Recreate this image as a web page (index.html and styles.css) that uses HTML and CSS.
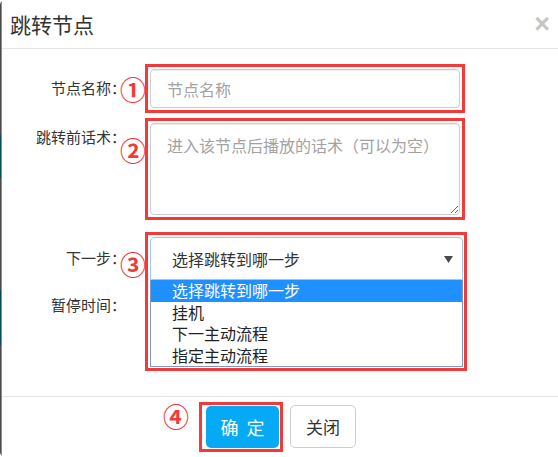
FILE: index.html
```html
<!DOCTYPE html>
<html lang="zh-CN">
<head>
    <meta charset="UTF-8">
    <meta name="viewport" content="width=device-width, initial-scale=1.0">
    <title>跳转节点</title>
    <link rel="stylesheet" href="styles.css">
</head>
<body>
    <div class="modal">
        <div class="modal-header">
            <h4 class="modal-title">跳转节点</h4>
            <button type="button" class="close">&times;</button>
        </div>

        <div class="modal-body">
            <!-- 节点名称 -->
            <div class="form-row row-name">
                <label class="form-label">
                    <span class="label-text">节点名称<span class="colon">：</span></span>
                    <span class="num">①</span>
                </label>
                <div class="mark">
                    <input type="text" class="form-control" placeholder="节点名称">
                </div>
            </div>

            <!-- 跳转前话术 -->
            <div class="form-row row-speech">
                <label class="form-label">
                    <span class="label-text">跳转前话术<span class="colon">：</span></span>
                    <span class="num">②</span>
                </label>
                <div class="mark">
                    <textarea class="form-control" placeholder="进入该节点后播放的话术（可以为空）"></textarea>
                </div>
            </div>

            <!-- 下一步 (dropdown open) -->
            <div class="form-row row-next">
                <label class="form-label">
                    <span class="label-text">下一步<span class="colon">：</span></span>
                    <span class="num">③</span>
                </label>
                <div class="select-field">
                    <div class="mark mark-drop">
                        <div class="select-box">
                            <span>选择跳转到哪一步</span>
                            <svg class="caret" width="9" height="7" viewBox="0 0 9 7"><path d="M0 0h9L4.5 7z" fill="#4a4a4a"/></svg>
                        </div>
                        <ul class="select-list">
                            <li class="active">选择跳转到哪一步</li>
                            <li>挂机</li>
                            <li>下一主动流程</li>
                            <li>指定主动流程</li>
                        </ul>
                    </div>
                </div>
            </div>

            <!-- 暂停时间 -->
            <div class="form-row row-pause">
                <label class="form-label">
                    <span class="label-text">暂停时间<span class="colon">：</span></span>
                </label>
                <div class="field">
                    <input type="text" class="form-control">
                </div>
            </div>
        </div>

        <div class="modal-footer">
            <span class="num num-footer">④</span>
            <div class="btn-mark">
                <button type="button" class="btn btn-primary">确定</button>
            </div>
            <button type="button" class="btn btn-default">关闭</button>
        </div>
    </div>
</body>
</html>
```

FILE: styles.css
```css
* {
    box-sizing: border-box;
    margin: 0;
    padding: 0;
}

html, body {
    overflow: hidden;
}

body {
    font-family: "Noto Sans CJK SC", "Liberation Sans", sans-serif;
    background-color: #ffffff;
    color: #333333;
}

.modal {
    width: 562px;
    height: 457px;
    padding-left: 2px;
    border-radius: 5px 0 0 5px;
    background:
        linear-gradient(to bottom, #4b4b4b 0 135px, #0c4a5c 135px 178px, #4b4b4b 178px 290px, #0c4a5c 290px 345px, #4b4b4b 345px) 0 0 / 1px 100% no-repeat,
        linear-gradient(#8c8c8c, #8c8c8c) 1px 0 / 1px 100% no-repeat,
        #ffffff;
}

/* header */
.modal-header {
    height: 49px;
    display: flex;
    align-items: center;
    justify-content: space-between;
    padding: 0 12px 0 8px;
    border-bottom: 1px solid #e5e5e5;
}

.modal-title {
    font-size: 21px;
    font-weight: 400;
    line-height: 1;
    color: #333333;
}

.close {
    font-family: "Liberation Sans", sans-serif;
    font-size: 27px;
    font-weight: bold;
    line-height: 1;
    color: #c6c6c6;
    background: none;
    border: none;
    cursor: pointer;
}

/* body */
.modal-body {
    height: 347px;
    padding-top: 15px;
}

.form-row {
    display: flex;
    align-items: flex-start;
}

.row-name { margin-bottom: 5px; }
.row-speech { margin-bottom: 12px; }
.row-next { margin-bottom: 5px; }

.form-label {
    width: 143px;
    display: flex;
    justify-content: flex-end;
    align-items: flex-start;
    font-size: 15px;
    line-height: 20px;
    color: #333333;
}

.label-text {
    white-space: nowrap;
}

.colon {
    display: inline-block;
    width: 7px;
}

.num {
    font-family: "Noto Sans CJK SC", sans-serif;
    font-size: 26px;
    font-weight: 700;
    line-height: 24px;
    color: #f23a3a;
    margin: 0 -1px 0 2px;
}

.row-name .label-text { margin-top: 14px; }
.row-name .num { margin-top: 13px; }
.row-speech .label-text { margin-top: 9px; }
.row-speech .num { margin-top: 20px; }
.row-next .label-text { margin-top: 16px; }
.row-next .num { margin-top: 20px; }
.row-pause .label-text { margin-top: 10px; }
.row-pause .form-label { padding-right: 27px; }

.mark {
    width: 320px;
    padding: 2px;
    border: 3px solid #f23a3a;
}

.form-control {
    display: block;
    width: 100%;
    height: 39px;
    padding: 0 16px;
    font-family: inherit;
    font-size: 16px;
    color: #555555;
    background-color: #ffffff;
    border: 1px solid #cccccc;
    border-radius: 4px;
    box-shadow: inset 0 1px 1px rgba(0, 0, 0, 0.075);
}

.form-control::placeholder {
    color: #a2a2a2;
}

textarea.form-control {
    height: 92px;
    padding: 10px 16px;
    line-height: 22px;
}

.field {
    width: 320px;
    padding-left: 5px;
}

/* open select */
.select-field {
    position: relative;
    width: 322px;
    height: 48px;
}

.mark-drop {
    position: absolute;
    top: 0;
    left: 0;
    z-index: 2;
    width: 322px;
    padding: 2px 1px 1px 2px;
    background-color: #ffffff;
}

.select-box {
    height: 43px;
    display: flex;
    align-items: center;
    justify-content: space-between;
    padding: 0 9px 0 21px;
    font-size: 16px;
    color: #333333;
    border: 1px solid #a4c6ec;
    border-radius: 4px 4px 0 0;
}

.caret {
    margin-top: 1px;
}

.select-list {
    list-style: none;
    border: 1px solid #7d99c8;
    border-top: none;
}

.select-list li {
    height: 21.5px;
    line-height: 21.5px;
    padding-left: 21px;
    font-size: 16px;
    color: #222222;
}

.select-list li.active {
    background-color: #1e90ff;
    color: #ffffff;
}

/* footer */
.modal-footer {
    height: 61px;
    display: flex;
    justify-content: center;
    align-items: flex-start;
    padding: 5px 9px 0 0;
    border-top: 1px solid #e5e5e5;
}

.num-footer {
    line-height: 26px;
    margin: 1px 10px 0 -36px;
}

.btn-mark {
    border: 3px solid #f23a3a;
    padding: 1px 1px 1px 4px;
}

.btn {
    display: block;
    font-family: inherit;
    border-radius: 5px;
    cursor: pointer;
}

.btn-primary {
    width: 73px;
    height: 42px;
    padding-left: 8px;
    font-size: 18px;
    letter-spacing: 8px;
    color: #ffffff;
    background-color: #06a9f4;
    border: none;
}

.btn-default {
    width: 66px;
    height: 43px;
    margin: 3px 0 0 7px;
    font-size: 17px;
    color: #333333;
    background-color: #ffffff;
    border: 1px solid #cccccc;
}
```
